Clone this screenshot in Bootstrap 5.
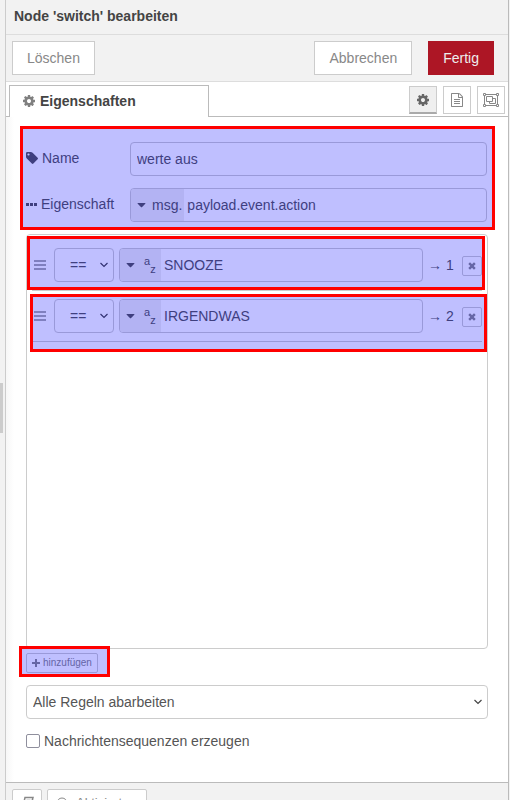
<!DOCTYPE html>
<html lang="de">
<head>
<meta charset="utf-8">
<meta name="viewport" content="width=device-width, initial-scale=1">
<title>Node 'switch' bearbeiten</title>
<link rel="stylesheet" href="https://cdn.jsdelivr.net/npm/bootstrap@5.3.0/dist/css/bootstrap.min.css">
<style>
body { font: 14px/20px "Liberation Sans", Arial, sans-serif; color: #555; background: #f2f2f2; }
svg { fill: currentColor; flex: none; display: block; }
svg.outline { fill: none; stroke: currentColor; }
.resizer { width: 5px; padding-top: 16px; }
.resizer-grip { width: 3px; height: 50px; background: #ccc; }
.tray { border-left: 1px solid #ccc; border-right: 1px solid #bbb; margin-right: 1px; min-width: 0; }
.tray-title { font-size: 14px; line-height: 20px; padding: 6px 8px 8px; border-bottom: 1px solid #ddd; color: #444; }
.tray-toolbar { height: 47px; padding: 0 14px 0 6px; border-bottom: 1px solid #ddd; }
.btn-tray { font-size: 14px; line-height: 20px; padding: 6px 14px; border-radius: 0; border: 1px solid #ccc; background: #fff; color: #888; }
.btn-done { background: #ad1625; border-color: #ad1625; color: #eee; }
.tray-tabs { height: 35px; padding: 3px 3px 0; background: #fff; border-bottom: 1px solid #bbb; }
.tab-main { width: 200px; height: 32px; padding: 0 12px 1px; border: 1px solid #bbb; border-bottom: 0; background: #fff; color: #444; text-decoration: none; margin-bottom: -1px; }
.tab-main svg { color: #808080; }
.tab-tools { gap: 6px; padding-top: 1px; }
.btn-tab { width: 28px; height: 28px; border: 1px solid #ccc; border-radius: 0; background: #fff; color: #888; padding: 0; }
.btn-tab.active { background: #efefef; border-color: #ccc; border-bottom: 2px solid #aaa; color: #666; }
.tray-body { background: linear-gradient(to right, #f7f7f7, #fff 8px); padding: 25px 20px 31px; border-bottom: 1px solid #bbb; }
.field-label { width: 104px; flex: none; gap: 4px; padding-bottom: 2px; }
.node-fields { padding-right: 1px; }
.node-control, .node-control.form-select, .node-control.form-control { height: 34px; font-size: 14px; line-height: 20px; color: #555; border: 1px solid #ccc; border-radius: 4px; padding: 0 6px; background-color: #fff; }
.node-control.form-select { background-image: url("data:image/svg+xml,%3Csvg xmlns='http://www.w3.org/2000/svg' viewBox='0 0 8 6'%3E%3Cpath d='M.5 1L4 4.500 7.500 1' fill='none' stroke='%23444' stroke-width='1.200'/%3E%3C/svg%3E"); background-size: 8px 6px; background-position: right 5px center; }
.node-control.op-select { width: 60px; flex: none; padding-left: 15px; padding-right: 16px; }
.typed { overflow: hidden; min-width: 0; }
.typed.node-control { padding: 0; }
.typed-rule { margin-left: 5px; }
.typed-type { border: 0; background: #efefef; color: #555; padding: 0 2px 0 6px; gap: 6px; flex: none; }
.typed-type.string-type { width: 41px; padding-right: 6px; gap: 9px; }
.typed-value { border: 0; background: transparent; color: #555; padding: 0 3px; min-width: 0; outline: 0; }
.az { height: 18px; font-size: 11px; line-height: 10px; }
.rules { min-height: 415px; margin-top: 12px; padding: 5px; border: 1px solid #ccc; border-radius: 4px; background: #fff; }
.rule-row { padding: 8px 0; border-bottom: 1px solid #ccc; list-style: none; }
.rule-handle { width: 22px; padding-left: 2px; color: #aaa; flex: none; }
.rule-port { width: 39px; padding-left: 5px; flex: none; white-space: nowrap; }
.btn-mini { font-size: 10px; line-height: 18px; padding: 0 5px; border: 1px solid #ccc; border-radius: 2px; background: #fff; color: #888; gap: 3px; }
.btn-remove { width: 20px; height: 20px; padding: 0; flex: none; margin-top: 2px; }
.add-wrap { margin: 4px 0 12px; }
.seq-check { width: 14px; height: 14px; margin: 0; border: 1px solid #8f8f9d; border-radius: 2px; appearance: none; background: #fff; }
.seq-check:checked { background: #555; }
.tray-footer { padding: 6px; gap: 5px; }
.btn-foot { font-size: 13px; line-height: 20px; padding: 3px 8px; border: 1px solid #ccc; border-radius: 2px; background: #fff; color: #888; }
.btn-state { width: 100px; }
.btn-help { width: 30px; }
/* Highlight frames laid over the parts being explained */
.marker { position: absolute; border: 3px solid #f00; background: rgba(0,0,255,.25); pointer-events: none; z-index: 2; }
.marker-fields { inset: -16px -7px -8px -6px; }
.marker-rule1 { inset: -4px -3px 0 -5px; }
.marker-rule2 { inset: 3px -5px -11px -2px; }
.marker-add { inset: -7px -12px -4px -7px; }
</style>
<script src="https://cdn.jsdelivr.net/npm/bootstrap@5.3.0/dist/js/bootstrap.bundle.min.js"></script>
</head>
<body>
<svg class="d-none" aria-hidden="true">
  <symbol id="i-cog" viewBox="0 0 1792 1792"><path d="M1152 896q0-106-75-181t-181-75-181 75-75 181 75 181 181 75 181-75 75-181zm512-109v222q0 12-8 23t-20 13l-185 28q-19 54-39 91 35 50 107 138 10 12 10 25t-9 23q-27 37-99 108t-94 71q-12 0-26-9l-138-108q-44 23-91 38-16 136-29 186-7 28-36 28h-222q-14 0-24.500-8.500t-11.500-21.500l-28-184q-49-16-90-37l-141 107q-10 9-25 9-14 0-25-11-126-114-165-168-7-10-7-23 0-12 8-23 15-21 51-66.500t54-70.500q-27-50-41-99l-183-27q-13-2-21-12.500t-8-23.500v-222q0-12 8-23t19-13l186-28q14-46 39-92-40-57-107-138-10-12-10-24 0-10 9-23 26-36 98.500-107.500t94.500-71.500q13 0 26 10l138 107q44-23 91-38 16-136 29-186 7-28 36-28h222q14 0 24.500 8.500t11.500 21.500l28 184q49 16 90 37l142-107q9-9 24-9 13 0 25 10 129 119 165 170 7 8 7 22 0 12-8 23-15 21-51 66.500t-54 70.500q26 50 41 98l183 28q13 2 21 12.500t8 23.500z"/></symbol>
  <symbol id="i-doc" viewBox="0 0 1792 1792"><path d="M1596 380q28 28 48 76t20 88v1152q0 40-28 68t-68 28h-1344q-40 0-68-28t-28-68v-1600q0-40 28-68t68-28h896q40 0 88 20t76 48zm-444-244v376h376q-10-29-22-41l-313-313q-12-12-41-22zm384 1528v-1024h-416q-40 0-68-28t-28-68v-416h-768v1536h1280zm-1024-864q0-14 9-23t23-9h704q14 0 23 9t9 23v64q0 14-9 23t-23 9h-704q-14 0-23-9t-9-23v-64zm736 224q14 0 23 9t9 23v64q0 14-9 23t-23 9h-704q-14 0-23-9t-9-23v-64q0-14 9-23t23-9h704zm0 256q14 0 23 9t9 23v64q0 14-9 23t-23 9h-704q-14 0-23-9t-9-23v-64q0-14 9-23t23-9h704z"/></symbol>
  <symbol id="i-caret" viewBox="0 0 8 5"><path d="M.4 0h7.200q.6.300.2.800L4.400 4.200q-.4.300-.8 0L.2.800Q-.2.300.4 0z"/></symbol>
  <symbol id="i-x" viewBox="0 0 8 8"><path d="M2 .3L4 2.300 6 .3 7.700 2 5.700 4l2 2L6 7.700l-2-2-2 2L.3 6l2-2-2-2z"/></symbol>
  <symbol id="i-bars" viewBox="0 0 12 10"><path d="M0 0h12v2H0zM0 4h12v2H0zM0 8h12v2H0z"/></symbol>
</svg>

<div class="d-flex vh-100 overflow-hidden">
  <div class="resizer d-flex align-items-center flex-shrink-0"><div class="resizer-grip"></div></div>
  <main class="tray d-flex flex-column flex-grow-1">
    <h1 class="tray-title fw-bold m-0">Node 'switch' bearbeiten</h1>
    <div class="tray-toolbar d-flex align-items-center flex-shrink-0">
      <button type="button" class="btn btn-tray me-auto">Löschen</button>
      <button type="button" class="btn btn-tray me-3">Abbrechen</button>
      <button type="button" class="btn btn-tray btn-done">Fertig</button>
    </div>
    <nav class="tray-tabs d-flex flex-shrink-0" aria-label="Bereiche">
      <a href="#eigenschaften" class="tab-main d-flex align-items-center fw-bold me-auto"><svg class="me-1" width="14" height="14"><use href="#i-cog"/></svg>Eigenschaften</a>
      <div class="tab-tools d-flex">
        <button type="button" class="btn btn-tab active d-flex align-items-center justify-content-center" aria-label="Eigenschaften"><svg width="14" height="14"><use href="#i-cog"/></svg></button>
        <button type="button" class="btn btn-tab d-flex align-items-center justify-content-center" aria-label="Beschreibung"><svg width="14" height="14"><use href="#i-doc"/></svg></button>
        <button type="button" class="btn btn-tab d-flex align-items-center justify-content-center" aria-label="Darstellung"><svg class="outline" width="16" height="14" viewBox="0 0 16 14"><path d="M3 1.500h10M3 12.500h10M1.500 3v8M14.500 3v8M.5.500h2v2h-2zM13.500.500h2v2h-2zM.5 11.500h2v2h-2zM13.500 11.500h2v2h-2zM3.500 3.500h6v5h-6zM9.500 5.500h3v5h-6v-2"/></svg></button>
      </div>
    </nav>

    <form class="tray-body flex-shrink-0" id="eigenschaften">
      <div class="node-fields position-relative d-flex flex-column">
        <div class="d-flex align-items-center mb-1 pb-2">
          <label class="field-label d-flex align-items-center" for="node-name"><svg width="12" height="12" viewBox="0 0 12 12"><path fill-rule="evenodd" d="M0 1.200Q0 0 1.200 0h3.600q1 0 1.800.7l5 5q.8.800 0 1.600l-4.200 4.300q-.8.800-1.600 0l-5-5Q0 5.800 0 4.800zM2.500 1.400a1.100 1.100 0 100 2.200 1.100 1.100 0 000-2.200z"/></svg>Name</label>
          <input id="node-name" type="text" class="form-control node-control" value="werte aus">
        </div>
        <div class="d-flex align-items-center">
          <label class="field-label d-flex align-items-center" for="node-prop"><svg width="11" height="3" viewBox="0 0 11 3"><path d="M0 0h3v3H0zM4 0h3v3H4zM8 0h3v3H8z"/></svg>Eigenschaft</label>
          <div class="node-control typed d-flex flex-grow-1">
            <button type="button" class="typed-type d-flex align-items-center"><svg width="9" height="5"><use href="#i-caret"/></svg>msg.</button>
            <input id="node-prop" type="text" class="typed-value flex-grow-1" value="payload.event.action">
          </div>
        </div>
        <span class="marker marker-fields"></span>
      </div>

      <ol class="rules mb-0">
        <li class="rule-row position-relative d-flex align-items-center">
          <span class="rule-handle"><svg width="12" height="10"><use href="#i-bars"/></svg></span>
          <select class="form-select node-control op-select" aria-label="Operator Regel 1"><option>==</option><option>!=</option></select>
          <div class="node-control typed typed-rule d-flex flex-grow-1">
            <button type="button" class="typed-type string-type d-flex align-items-center" aria-label="Zeichenkette"><svg width="9" height="5"><use href="#i-caret"/></svg><span class="az d-flex"><span class="align-self-start">a</span><span class="align-self-end">z</span></span></button>
            <input type="text" class="typed-value flex-grow-1" value="SNOOZE" aria-label="Wert Regel 1">
          </div>
          <span class="rule-port">→ 1</span>
          <button type="button" class="btn btn-mini btn-remove d-flex align-items-center justify-content-center" aria-label="Regel 1 entfernen"><svg width="8" height="8"><use href="#i-x"/></svg></button>
          <span class="marker marker-rule1"></span>
        </li>
        <li class="rule-row position-relative d-flex align-items-center">
          <span class="rule-handle"><svg width="12" height="10"><use href="#i-bars"/></svg></span>
          <select class="form-select node-control op-select" aria-label="Operator Regel 2"><option>==</option><option>!=</option></select>
          <div class="node-control typed typed-rule d-flex flex-grow-1">
            <button type="button" class="typed-type string-type d-flex align-items-center" aria-label="Zeichenkette"><svg width="9" height="5"><use href="#i-caret"/></svg><span class="az d-flex"><span class="align-self-start">a</span><span class="align-self-end">z</span></span></button>
            <input type="text" class="typed-value flex-grow-1" value="IRGENDWAS" aria-label="Wert Regel 2">
          </div>
          <span class="rule-port">→ 2</span>
          <button type="button" class="btn btn-mini btn-remove d-flex align-items-center justify-content-center" aria-label="Regel 2 entfernen"><svg width="8" height="8"><use href="#i-x"/></svg></button>
          <span class="marker marker-rule2"></span>
        </li>
      </ol>

      <div class="add-wrap d-flex">
        <div class="position-relative">
          <button type="button" class="btn btn-mini d-flex align-items-center"><svg width="8" height="8" viewBox="0 0 8 8"><path d="M3 0h2v3h3v2H5v3H3V5H0V3h3z"/></svg>hinzufügen</button>
          <span class="marker marker-add"></span>
        </div>
      </div>

      <select class="form-select node-control" aria-label="Regelmodus"><option>Alle Regeln abarbeiten</option><option>Nach erster Übereinstimmung stoppen</option></select>
      <div class="d-flex align-items-center gap-1 pt-2 mt-1">
        <input type="checkbox" class="seq-check" id="seq"><label for="seq">Nachrichtensequenzen erzeugen</label>
      </div>
    </form>

    <footer class="tray-footer d-flex flex-shrink-0">
      <button type="button" class="btn btn-foot btn-help d-flex align-items-center" aria-label="Hilfe"><svg class="outline" width="14" height="14" viewBox="0 0 14 14" stroke-width="1.500"><path d="M4 1.500h8L9.500 10.500H2L4 1.500zM5.500 4.500h4M2 10.500q-1 2 .5 2H10L13 4"/></svg></button>
      <button type="button" class="btn btn-foot btn-state d-flex align-items-center"><svg class="outline me-2" width="12" height="12" viewBox="0 0 12 12"><circle cx="6" cy="6" r="5"/></svg>Aktiviert</button>
    </footer>
  </main>
</div>
</body>
</html>
